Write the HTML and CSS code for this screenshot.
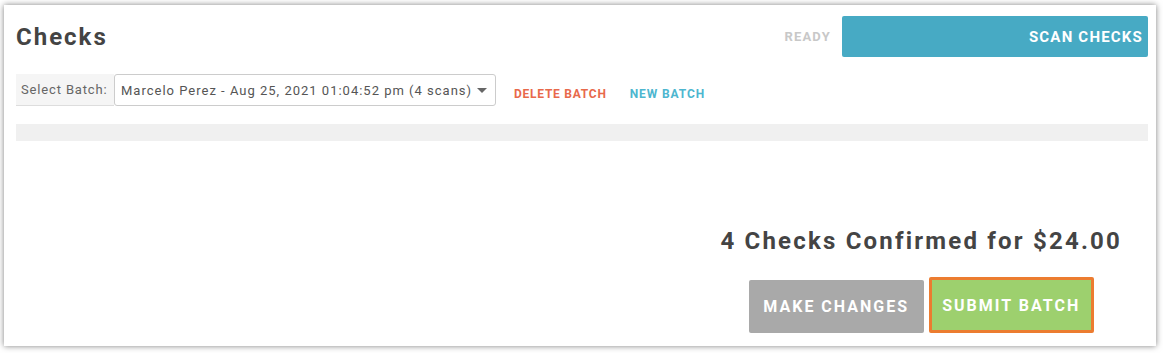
FILE: index.html
```html
<!DOCTYPE html>
<html lang="en">

<head>
    <meta charset="UTF-8">
    <meta name="viewport" content="width=device-width, initial-scale=1.0">
    <title>Checks</title>
    <link rel="stylesheet" href="styles.css">
</head>

<body>

    <div class="panel">

        <!-- Header Section -->
        <div class="header">
            <h1>Checks</h1>
            <div class="header-right">
                <span class="status">READY</span>
                <button class="scan-btn">SCAN CHECKS</button>
            </div>
        </div>

        <!-- Batch Select Section -->
        <div class="toolbar">
            <div class="batch-group">
                <label for="batch">Select Batch:</label>
                <div class="batch-select" id="batch">
                    <span>Marcelo Perez - Aug 25, 2021 01:04:52 pm (4 scans)</span>
                    <span class="caret"></span>
                </div>
            </div>
            <a href="#" class="link link-delete">DELETE BATCH</a>
            <a href="#" class="link link-new">NEW BATCH</a>
        </div>

        <div class="progress"></div>

        <!-- Summary Section -->
        <div class="summary">
            <div class="summary-box">
                <h2>4 Checks Confirmed for $24.00</h2>
                <div class="actions">
                    <button class="btn btn-gray">MAKE CHANGES</button>
                    <button class="btn btn-green">SUBMIT BATCH</button>
                </div>
            </div>
        </div>

    </div>

</body>

</html>
```

FILE: styles.css
```css
body {
    font-family: Roboto, 'Liberation Sans', sans-serif;
    background-color: #fff;
    margin: 0;
    padding: 5px 7px 7px 4px;
}

.panel {
    height: 341px;
    box-sizing: border-box;
    background-color: #fff;
    padding: 11px 8px 0 12px;
    box-shadow: 0 0 6px rgba(0, 0, 0, 0.5);
}

.header {
    display: flex;
    justify-content: space-between;
    align-items: center;
}

h1 {
    color: #444;
    font-size: 24px;
    font-weight: 700;
    letter-spacing: 2px;
    margin: 0;
}

.header-right {
    display: flex;
    align-items: center;
    gap: 11px;
}

.status {
    color: #c8c8c8;
    font-size: 13px;
    font-weight: 700;
    letter-spacing: 1.2px;
}

.scan-btn {
    width: 306px;
    height: 41px;
    background-color: #47aac4;
    color: #fff;
    border: none;
    border-radius: 2px;
    font-family: inherit;
    font-size: 15px;
    font-weight: 700;
    letter-spacing: 1.2px;
    text-align: right;
    padding: 0 5px 0 0;
}

.toolbar {
    display: flex;
    align-items: center;
    margin-top: 17px;
}

.batch-group {
    display: flex;
    height: 32px;
}

label {
    display: flex;
    align-items: center;
    box-sizing: border-box;
    width: 98px;
    background-color: #f5f5f5;
    border-bottom: 1px solid #ddd;
    color: #666;
    font-size: 13px;
    letter-spacing: 0.85px;
    padding: 0 5px;
}

.batch-select {
    display: flex;
    align-items: center;
    gap: 5px;
    box-sizing: border-box;
    width: 382px;
    border: 1px solid #ccc;
    border-radius: 3px;
    padding: 0 6px;
    color: #555;
    font-size: 13px;
    letter-spacing: 1px;
}

.caret {
    width: 0;
    height: 0;
    border-left: 5px solid transparent;
    border-right: 5px solid transparent;
    border-top: 5px solid #666;
}

.link {
    font-size: 12px;
    font-weight: 700;
    text-decoration: none;
    margin-left: 18px;
    padding-top: 7px;
}

.link-delete {
    color: #e8694b;
    letter-spacing: 0.75px;
}

.link-new {
    color: #4db6cf;
    letter-spacing: 0.9px;
    margin-left: 23px;
}

.progress {
    height: 17px;
    background-color: #f0f0f0;
    margin-top: 18px;
}

.summary {
    display: flex;
    justify-content: flex-end;
    padding-right: 26px;
    margin-top: 86px;
}

.summary-box {
    display: flex;
    flex-direction: column;
    align-items: center;
}

h2 {
    color: #444;
    font-size: 24px;
    font-weight: 700;
    letter-spacing: 2.2px;
    margin: 0;
}

.actions {
    display: flex;
    align-items: center;
    gap: 5px;
    margin-top: 22px;
}

.btn {
    border: none;
    border-radius: 2px;
    color: #fff;
    font-family: inherit;
    font-size: 16px;
    font-weight: 700;
    letter-spacing: 2px;
    cursor: pointer;
}

.btn-gray {
    width: 175px;
    height: 53px;
    background-color: #a9a9a9;
    margin-top: 3px;
}

.btn-green {
    width: 165px;
    height: 56px;
    background-color: #9dd06e;
    border: 3px solid #ec7c30;
}
```
